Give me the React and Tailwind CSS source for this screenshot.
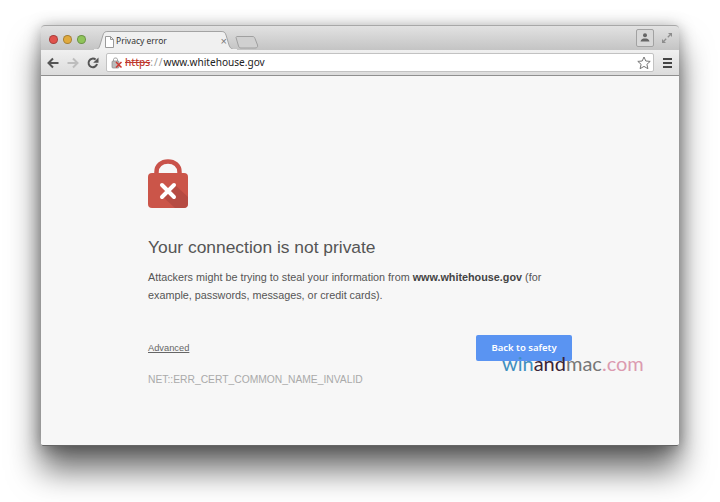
import React from 'react';

const sans = "font-['Liberation_Sans',Arial,sans-serif]";
const noto = "font-['Noto_Sans',sans-serif]";

const TrafficLight = ({ color }) => (
  <div className={`w-[9px] h-[9px] rounded-full border border-black/25 ${color}`} />
);

const Tab = () => (
  <div className="relative h-[19px] w-[143px] ml-[8px] self-end">
    <svg className="absolute inset-0" width="143" height="19" viewBox="0 0 143 19">
      <path d="M0 19 C4 19 5 17 6 14 L9 4 C10 1 11 0.5 14 0.5 L127 0.5 C130 0.5 131 1 132 4 L135 14 C136 17 138 19 143 19 Z" fill="#f0f0f0" stroke="#a3a3a3" />
      <path d="M0 19 H143" stroke="#f0f0f0" strokeWidth="2" />
    </svg>
    <div className="relative flex items-center h-full pl-[11px] pr-[10px] pt-[2px]">
      <svg width="9" height="12" viewBox="0 0 9 12">
        <path d="M0.5 0.5 H5.5 L8.5 3.5 V11.5 H0.5 Z M5.5 0.5 V3.5 H8.5" fill="#fff" stroke="#9a9a9a" />
      </svg>
      <span className={`${noto} ml-[2px] text-[8.5px] text-[#333] whitespace-nowrap`}>Privacy error</span>
      <span className={`${sans} ml-auto text-[11px] leading-none text-[#777]`}>×</span>
    </div>
  </div>
);

const NewTab = () => (
  <svg className="self-end mb-[1px] -ml-[2px]" width="24" height="13" viewBox="0 0 24 13">
    <path d="M1 1.5 C1 1 1.5 0.5 2 0.5 H17 C19 0.5 19.5 1 20 2.5 L22.5 9 C23 11 22 12 20 12 H6 C4.5 12 4 11.5 3.5 10 Z" fill="#d0d0d0" stroke="#a0a0a0" />
  </svg>
);

const ToolIcon = ({ children, className = '' }) => (
  <svg className={className} width="14" height="14" viewBox="0 0 14 14" fill="none">
    {children}
  </svg>
);

const Lock = () => (
  <svg width="40" height="50" viewBox="0 0 40 50">
    <path d="M8.5 16 V13 C8.5 6.5 13.5 2.5 20 2.5 C26.5 2.5 31.5 6.5 31.5 13 V16" fill="none" stroke="#c9524a" strokeWidth="4.5" />
    <rect x="0" y="14" width="40" height="35" rx="4" fill="#cb5549" />
    <path d="M26 25 L40 38 V45 C40 47 38 49 36 49 H27 L14 37 Z" fill="#a9453d" opacity="0.6" />
    <path d="M14 26 L26 38 M26 26 L14 38" stroke="#fff" strokeWidth="4" strokeLinecap="round" />
  </svg>
);

const App = () => {
  return (
    <div className="relative w-[720px] h-[502px] bg-white overflow-hidden pt-[25px] pl-[41px]">
      <div className="relative w-[638px] h-[421px] flex flex-col rounded-t-[4px] rounded-b-[2px] shadow-[0_24px_32px_rgba(0,0,0,0.58),0_2px_16px_rgba(0,0,0,0.35)]">
        {/* tab strip */}
        <div className="h-[25px] flex items-stretch pl-[8px] pr-[6px] rounded-t-[4px] border-t border-[#a8a8a8] bg-gradient-to-b from-[#e2e2e2] to-[#c4c4c4]">
          <div className="flex items-center gap-[5px] h-[24px] pt-[2px]">
            <TrafficLight color="bg-[#e0524c]" />
            <TrafficLight color="bg-[#e0aa3e]" />
            <TrafficLight color="bg-[#8fc45a]" />
          </div>
          <Tab />
          <NewTab />
          <div className="ml-auto flex items-center gap-[7px] pb-[1px]">
            <div className="w-[18px] h-[18px] rounded-[2px] border border-[#a2a2a2] bg-[#d8d8d8] flex items-center justify-center">
              <svg width="10" height="9" viewBox="0 0 10 9">
                <circle cx="5" cy="2.3" r="2" fill="#666" />
                <path d="M0.5 8.5 C1 6 3 5.5 5 5.5 C7 5.5 9 6 9.5 8.5 Z" fill="#666" />
              </svg>
            </div>
            <svg width="12" height="12" viewBox="0 0 12 12" fill="none">
              <path d="M7 1 H11 V5 Z M5 11 H1 V7 Z" fill="#8d8d8d" />
              <path d="M9 3 L6.8 5.2 M3 9 L5.2 6.8" stroke="#8d8d8d" strokeWidth="1.3" />
            </svg>
          </div>
        </div>

        {/* toolbar */}
        <div className="h-[26px] flex items-center pl-[5px] pr-[7px] gap-[6px] bg-gradient-to-b from-[#f0f0f0] to-[#dcdcdc] border-b border-[#8f8f8f]">
          <ToolIcon>
            <path d="M12.5 7 H3 M7 2.5 L2.5 7 L7 11.5" stroke="#555" strokeWidth="2" />
          </ToolIcon>
          <ToolIcon>
            <path d="M1.5 7 H11 M7 2.5 L11.5 7 L7 11.5" stroke="#bdbdbd" strokeWidth="2" />
          </ToolIcon>
          <ToolIcon>
            <path d="M11 8 A4.3 4.3 0 1 1 9.6 3.6" stroke="#555" strokeWidth="2" />
            <path d="M12.5 1.5 V6.8 H7.2 Z" fill="#555" />
          </ToolIcon>
          <div className="flex-1 h-[19px] flex items-center pl-[4px] pr-[2px] bg-white border border-[#c2c2c2] rounded-[2px]">
            <svg width="12" height="13" viewBox="0 0 12 13">
              <rect x="1" y="5" width="7" height="7" rx="1" fill="#bbb" stroke="#888" strokeWidth="0.7" />
              <path d="M2.5 5 V3.5 C2.5 1.5 6.5 1.5 6.5 3.5 V5" fill="none" stroke="#999" />
              <path d="M5 6 L10.5 11.5 M10.5 6 L5 11.5" stroke="#cc3a32" strokeWidth="1.5" />
            </svg>
            <span className={`${noto} ml-[2px] text-[10.1px] leading-none whitespace-nowrap`}>
              <span className="text-[#c0392f] line-through font-medium">https</span>
              <span className="text-[#999] tracking-[1px]">://</span>
              <span className="text-[#222]">www.whitehouse.gov</span>
            </span>
            <svg className="ml-auto" width="14" height="14" viewBox="0 0 14 14">
              <path d="M7 1 L8.8 5 L13.2 5.4 L9.9 8.3 L10.9 12.7 L7 10.4 L3.1 12.7 L4.1 8.3 L0.8 5.4 L5.2 5 Z" fill="#fff" stroke="#777" />
            </svg>
          </div>
          <div className="flex flex-col gap-[2px] w-[9px] ml-[3px]">
            <div className="h-[2px] bg-[#444]" />
            <div className="h-[2px] bg-[#444]" />
            <div className="h-[2px] bg-[#444]" />
          </div>
        </div>

        {/* page */}
        <div className={`${sans} flex-1 bg-[#f7f7f7] pt-[83px] pl-[107px] pr-[107px] rounded-b-[2px] border-b border-[#666]`}>
          <Lock />
          <h1 className="mt-[26px] text-[17.4px] leading-[24px] text-[#555]">Your connection is not private</h1>
          <p className="mt-[9px] text-[10.8px] leading-[18px] text-[#555]">
            Attackers might be trying to steal your information from <strong className="text-[#444]">www.whitehouse.gov</strong> (for example, passwords, messages, or credit cards).
          </p>
          <div className="mt-[31px] flex items-center justify-between">
            <a className="pt-[1px] text-[9.3px] text-[#666] underline">Advanced</a>
            <button className={`${noto} w-[96px] h-[26px] rounded-[2px] bg-[#5a94f2] text-white text-[9.5px] font-semibold`}>Back to safety</button>
          </div>
          <p className="mt-[11px] text-[10.3px] leading-[16px] text-[#aaa]">NET::ERR_CERT_COMMON_NAME_INVALID</p>
        </div>
      </div>

      {/* watermark */}
      <div className="absolute left-[502px] top-[349px] font-['Lato',sans-serif] text-[20px] leading-[28px] whitespace-nowrap">
        <span className="text-[#3f8fc0]">win</span>
        <span className="text-[#3a2438]">and</span>
        <span className="text-[#777]">mac</span>
        <span className="text-[#dc9bb0]">.com</span>
      </div>
    </div>
  );
};

export default App;
